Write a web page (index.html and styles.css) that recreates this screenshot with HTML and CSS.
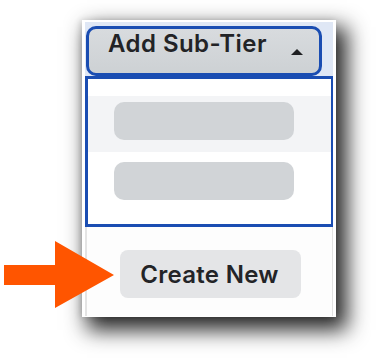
FILE: index.html
```html
<!DOCTYPE html>
<html>
<head>
<meta charset="utf-8">
<link rel="stylesheet" href="styles.css">
</head>
<body>
<div class="page">
  <div class="frame">
    <div class="inner">
      <div class="header">
        <div class="tier-btn">
          <span class="tier-label">Add Sub-Tier</span>
          <span class="caret"></span>
        </div>
      </div>
      <div class="dropdown">
        <div class="row row-first"><div class="skeleton"></div></div>
        <div class="row row-second"><div class="skeleton"></div></div>
      </div>
      <div class="footer">
        <div class="create-btn">Create New</div>
      </div>
    </div>
  </div>
  <svg class="arrow" width="120" height="80" viewBox="0 236 120 80">
    <polygon points="4,265 55,265 55,241 114,275 55,308 55,285 4,285" fill="#ff5500"/>
  </svg>
</div>
</body>
</html>
```

FILE: styles.css
```css
html, body {
  margin: 0;
  padding: 0;
  background: #ffffff;
}
body {
  font-family: Inter, "Noto Sans", "Liberation Sans", sans-serif;
  width: 376px;
  height: 358px;
  overflow: hidden;
}
.page {
  position: relative;
  width: 376px;
  height: 358px;
  padding-top: 20px;
  padding-left: 82px;
  box-sizing: border-box;
}
.frame {
  width: 254px;
  box-sizing: border-box;
  background: #ffffff;
  padding: 2px 3px 1px 3px;
  box-shadow: 8px 10px 20px 3px rgba(0, 0, 0, 0.85), -2px 0 6px rgba(0, 0, 0, 0.12);
}
.inner {
  display: flex;
  flex-direction: column;
}
.header {
  background: #dfe7f5;
  padding: 4px 11px 0 1px;
}
.tier-btn {
  height: 50px;
  box-sizing: border-box;
  border: 3px solid #1a4db2;
  border-radius: 10px;
  background: linear-gradient(#d8dbde, #cdd1d4);
  display: flex;
  justify-content: space-between;
  align-items: flex-start;
  padding: 0 16px 0 19px;
}
.tier-label {
  font-size: 24px;
  font-weight: 600;
  line-height: 29px;
  color: #222326;
  letter-spacing: 0.45px;
}
.caret {
  margin-top: 20px;
  width: 0;
  height: 0;
  border-left: 6.5px solid transparent;
  border-right: 6.5px solid transparent;
  border-bottom: 6px solid #1f2023;
}
.dropdown {
  border: 3px solid #1a4db2;
  border-right-width: 2px;
  background: #ffffff;
  padding-top: 17px;
}
.row {
  padding-left: 26px;
}
.row-first {
  background: #f3f4f6;
  padding-top: 6px;
  padding-bottom: 12px;
}
.row-second {
  padding-top: 10px;
  padding-bottom: 24px;
}
.skeleton {
  width: 180px;
  height: 38px;
  border-radius: 10px;
  background: #d1d4d7;
}
.footer {
  background: #fdfdfd;
  border-left: 2px solid #e4e4e4;
  border-right: 1px solid #e2e2e2;
  padding: 23px 0 18px 33px;
}
.create-btn {
  width: 181px;
  height: 48px;
  box-sizing: border-box;
  border-radius: 8px;
  background: #e4e5e7;
  color: #232427;
  font-size: 24px;
  font-weight: 600;
  letter-spacing: 0.3px;
  display: flex;
  align-items: center;
  justify-content: center;
  padding-right: 2px;
}
.arrow {
  position: absolute;
  left: 0;
  top: 236px;
}
```
